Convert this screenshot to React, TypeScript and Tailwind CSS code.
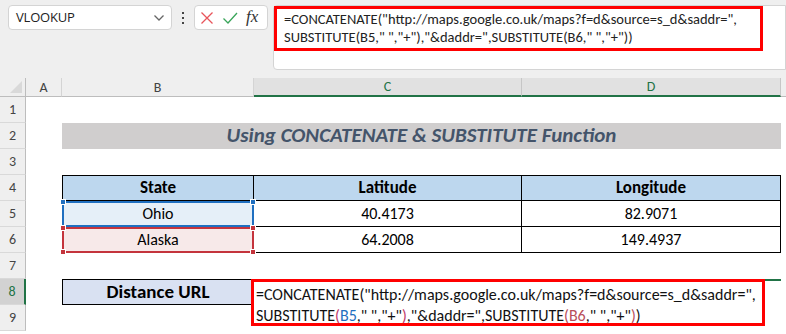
import React from "react";

const font = { fontFamily: 'Carlito, "Open Sans", "Liberation Sans", sans-serif' };

function Handle({ pos, color }: { pos: string; color: string }) {
  return <div className={`absolute w-[6px] h-[6px] border border-white ${pos} ${color}`} />;
}

export default function App() {
  const rowNums = ["1", "2", "3", "4", "5", "6", "7", "8", "9"];
  return (
    <div className="w-[786px] h-[334px] overflow-hidden bg-white" style={font}>
      {/* Top formula area */}
      <div className="h-[78px] bg-[#efefef] flex items-start pl-2 pt-[5px]">
        <div className="w-[164px] h-[25px] bg-white border border-[#d4d4d4] rounded-[4px] flex items-center justify-between pl-[7px] pr-[6px] text-[14px] text-[#222]">
          <span style={{ fontFamily: '"Open Sans", sans-serif' }} className="text-[13px] tracking-[-0.2px]">VLOOKUP</span>
          <svg width="12" height="8" viewBox="0 0 12 8"><path d="M1.5 1.5 L6 6 L10.5 1.5" fill="none" stroke="#666" strokeWidth="1.3" /></svg>
        </div>
        <div className="w-[22px] h-[25px] flex flex-col items-center justify-center gap-[3px]">
          <div className="w-[2px] h-[2px] bg-[#444]" />
          <div className="w-[2px] h-[2px] bg-[#444]" />
          <div className="w-[2px] h-[2px] bg-[#444]" />
        </div>
        <div className="w-[74px] h-[25px] bg-white border border-[#d4d4d4] rounded-[4px] flex items-center pl-[5px] gap-[8px]">
          <svg width="14" height="14" viewBox="0 0 14 14"><path d="M1.5 1.5 L12.5 12.5 M12.5 1.5 L1.5 12.5" stroke="#e8545a" strokeWidth="1.3" /></svg>
          <svg width="16" height="14" viewBox="0 0 16 14"><path d="M1.5 7.5 L6 12 L15 2" fill="none" stroke="#3aa55a" strokeWidth="1.3" /></svg>
          <span className="text-[17px] italic text-[#333] leading-none -mt-[2px]" style={{ fontFamily: '"Liberation Serif", serif' }}>fx</span>
        </div>
        <div className="ml-[5px] flex-1 h-[65px] bg-white border border-[#d4d4d4] rounded-l-[4px]">
          <div className="w-[489px] h-[45px] border-[3px] border-[#ff0000] pl-[7px] pt-[1px] text-[14.5px] leading-[18px] text-[#222] whitespace-nowrap">
            <div>=CONCATENATE("http://maps.google.co.uk/maps?f=d&amp;source=s_d&amp;saddr=",</div>
            <div>SUBSTITUTE(B5," ","+"),"&amp;daddr=",SUBSTITUTE(B6," ","+"))</div>
          </div>
        </div>
      </div>

      {/* Sheet grid */}
      <div className="grid grid-cols-[26px_36px_192px_268px_259px_1fr] grid-rows-[19px_repeat(9,26px)]">
        {/* header row */}
        <div className="bg-[#efefef] border-r border-b border-[#bdbdbd] relative overflow-hidden">
          <div className="absolute right-[3px] bottom-[3px] w-0 h-0 border-l-[12px] border-l-transparent border-b-[12px] border-b-[#d9d9d9]" />
        </div>
        <div className="bg-[#efefef] border-r border-[#d4d4d4] border-b border-b-[#bdbdbd] flex items-center justify-center text-[14px] text-[#444]">A</div>
        <div className="bg-[#efefef] border-r border-[#d4d4d4] border-b border-b-[#bdbdbd] flex items-center justify-center text-[14px] text-[#444]">B</div>
        <div className="bg-[#e1e1e1] border-r border-[#c6c6c6] border-b-2 border-b-[#217346] flex items-center justify-center text-[14px] text-[#217346]">C</div>
        <div className="bg-[#e1e1e1] border-r border-[#c6c6c6] border-b-2 border-b-[#217346] flex items-center justify-center text-[14px] text-[#217346]">D</div>
        <div className="bg-[#efefef] border-b border-[#bdbdbd]" />

        {rowNums.map((n, i) => {
          const r = i + 2;
          const isSel = n === "8";
          return (
            <div
              key={n}
              style={{ gridRow: r, gridColumn: 1 }}
              className={`${isSel ? "bg-[#d2d2d2] border-r-2 border-r-[#217346] text-[#217346]" : "bg-[#efefef] border-r border-r-[#bdbdbd] text-[#444]"} border-b border-b-[#d9d9d9] flex items-center justify-center text-[14px]`}
            >
              {n}
            </div>
          );
        })}

        {/* Row 2 title */}
        <div style={{ gridRow: 3, gridColumn: "3 / 6" }} className="bg-[#d0cece] flex items-center justify-center">
          <span className="text-[21px] font-bold italic text-[#44546a]">Using CONCATENATE &amp; SUBSTITUTE Function</span>
        </div>

        {/* Row 4 header */}
        <div style={{ gridRow: 5, gridColumn: 3 }} className="bg-[#bdd7ee] border border-black flex items-center justify-center text-[17px] font-bold text-black">State</div>
        <div style={{ gridRow: 5, gridColumn: 4 }} className="bg-[#bdd7ee] border-y border-r border-black flex items-center justify-center text-[17px] font-bold text-black">Latitude</div>
        <div style={{ gridRow: 5, gridColumn: 5 }} className="bg-[#bdd7ee] border-y border-r border-black flex items-center justify-center text-[17px] font-bold text-black">Longitude</div>

        {/* Row 5 */}
        <div style={{ gridRow: 6, gridColumn: 3 }} className="relative bg-[#e5eff8] border-2 border-[#1f6fc0] flex items-center justify-center text-[16px] text-black">
          Ohio
          <Handle pos="-left-[4px] -top-[4px]" color="bg-[#1f6fc0]" />
          <Handle pos="-right-[4px] -top-[4px]" color="bg-[#1f6fc0]" />
        </div>
        <div style={{ gridRow: 6, gridColumn: 4 }} className="border-b border-r border-black flex items-center justify-center text-[16px] text-black">40.4173</div>
        <div style={{ gridRow: 6, gridColumn: 5 }} className="border-b border-r border-black flex items-center justify-center text-[16px] text-black">82.9071</div>

        {/* Row 6 */}
        <div style={{ gridRow: 7, gridColumn: 3 }} className="relative bg-[#f7e9e9] border-2 border-[#c4343c] flex items-center justify-center text-[16px] text-black">
          Alaska
          <Handle pos="-left-[4px] -top-[4px]" color="bg-[#c4343c]" />
          <Handle pos="-right-[4px] -top-[4px]" color="bg-[#c4343c]" />
          <Handle pos="-left-[4px] -bottom-[4px]" color="bg-[#c4343c]" />
          <Handle pos="-right-[4px] -bottom-[4px]" color="bg-[#c4343c]" />
        </div>
        <div style={{ gridRow: 7, gridColumn: 4 }} className="border-b border-r border-black flex items-center justify-center text-[16px] text-black">64.2008</div>
        <div style={{ gridRow: 7, gridColumn: 5 }} className="border-b border-r border-black flex items-center justify-center text-[16px] text-black">149.4937</div>

        {/* Row 8 */}
        <div style={{ gridRow: 9, gridColumn: 3 }} className="bg-[#d9e1f2] border border-black flex items-center justify-center text-[19px] font-bold text-black">Distance URL</div>
        <div style={{ gridRow: 9, gridColumn: "4 / 6" }} className="relative border-t-2 border-[#217346]">
          <div className="absolute -left-[3px] -top-[2px] w-[514px] h-[47px] border-[3px] border-[#ff0000] pl-[2px] pt-[2px] text-[16px] leading-[21px] text-[#111] whitespace-nowrap">
            <div>=CONCATENATE("http://maps.google.co.uk/maps?f=d&amp;source=s_d&amp;saddr=",</div>
            <div>
              SUBSTITUTE<span className="text-[#c03a6a]">(</span>
              <span className="text-[#1f6fc0]">B5</span>," ","+"<span className="text-[#c03a6a]">)</span>,"&amp;daddr=",SUBSTITUTE<span className="text-[#b84e5a]">(</span>
              <span className="text-[#b84e5a]">B6</span>," ","+"<span className="text-[#b84e5a]">)</span>)
            </div>
          </div>
        </div>
      </div>
    </div>
  );
}
